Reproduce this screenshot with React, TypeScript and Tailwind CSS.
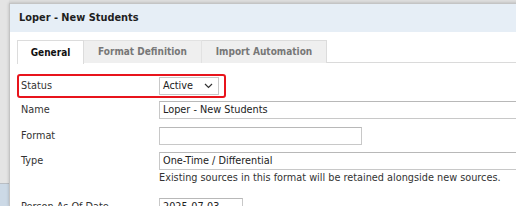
const font = { fontFamily: '"DejaVu Sans Condensed", "DejaVu Sans", sans-serif' };

function Chevron() {
  return (
    <svg width="9" height="6" viewBox="0 0 9 6" className="shrink-0">
      <polyline points="1,1 4.5,4.5 8,1" fill="none" stroke="#333" strokeWidth="1.2" />
    </svg>
  );
}

function Row({ label, children, className = "" }: { label: string; children: React.ReactNode; className?: string }) {
  return (
    <div className={`flex items-center pl-[4px] ${className}`}>
      <div className="w-[138px] shrink-0 text-[#333] whitespace-nowrap">{label}</div>
      {children}
    </div>
  );
}

function Input({ value, w }: { value: string; w: string }) {
  return (
    <div className={`${w} h-[18px] shrink-0 border border-[#c8c8c8] border-t-[#b8b8b8] bg-white flex items-center pl-[3px] text-[#222] whitespace-nowrap overflow-hidden`}>
      {value}
    </div>
  );
}

export default function App() {
  return (
    <div className="w-[516px] h-[206px] overflow-hidden flex bg-[#dedede] text-[10.8px] leading-none" style={font}>
      <div className="w-[9px] shrink-0 flex flex-col">
        <div className="h-[183px] bg-[#e4e4e4]" />
        <div className="flex-1 border-t border-[#b9bec4] bg-[#ccd9e6]" />
      </div>
      <div className="mt-[3px] w-[520px] shrink-0 bg-white border-l border-t border-[#c4c4c4] shadow-[0_0_3px_rgba(0,0,0,0.2)] flex flex-col">
        <div className="h-[28px] shrink-0 bg-[#e6eef6] flex items-center pl-[9px] font-bold text-[#1e1e1e] text-[10.9px]">
          Loper - New Students
        </div>
        <div className="px-[7px] pt-[8px]">
          <div className="flex h-[23px] border-b border-[#dadada] font-bold text-[10px]">
            <div className="w-[67px] h-[24px] bg-white border border-b-0 border-[#dcdcdc] flex items-center justify-center text-[#111]">
              General
            </div>
            <div className="w-[118px] h-[23px] bg-[#efefef] border-t border-r border-[#e2e2e2] flex items-center justify-center text-[#777]">
              Format Definition
            </div>
            <div className="w-[125px] h-[23px] bg-[#efefef] border-t border-r border-[#dcdcdc] flex items-center justify-center text-[#777]">
              Import Automation
            </div>
          </div>

          <div className="mt-[11px] w-[209px] h-[24px] border-2 border-[#e8141c] rounded-[3px] flex items-center pl-[2px]">
            <div className="w-[138px] shrink-0 text-[#333]">Status</div>
            <div className="w-[60px] h-[18px] border border-[#c8c8c8] bg-white flex items-center justify-between pl-[3px] pr-[5px] text-[#222]">
              <span>Active</span>
              <Chevron />
            </div>
          </div>

          <Row label="Name" className="mt-[3px]">
            <Input value="Loper - New Students" w="w-[400px]" />
          </Row>
          <Row label="Format" className="mt-[8px]">
            <Input value="" w="w-[203px]" />
          </Row>
          <Row label="Type" className="mt-[7px]">
            <Input value="One-Time / Differential" w="w-[400px]" />
          </Row>
          <div className="pl-[142px] mt-[1px] h-[14px] flex items-center text-[#333] whitespace-nowrap">
            Existing sources in this format will be retained alongside new sources.
          </div>
          <Row label="Person As Of Date" className="mt-[13px]">
            <Input value="2025-07-03" w="w-[84px]" />
          </Row>
        </div>
      </div>
    </div>
  );
}
